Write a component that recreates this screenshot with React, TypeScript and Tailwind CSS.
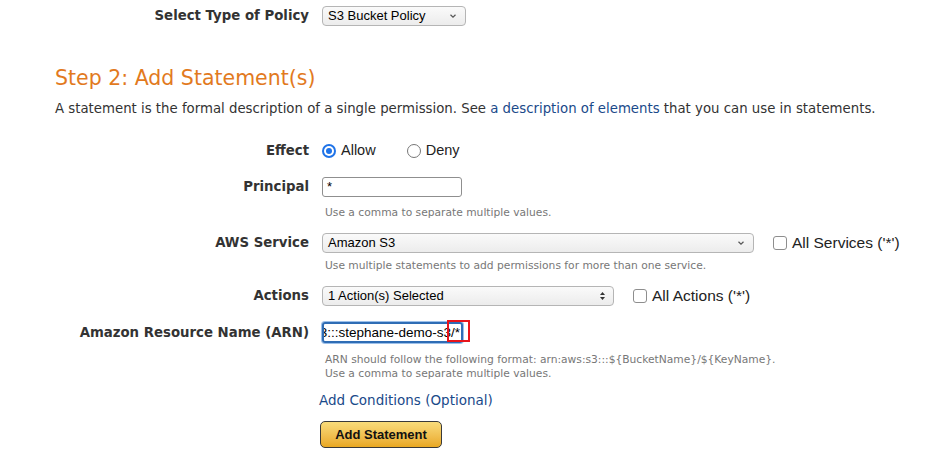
import React from "react";

const verdana = { fontFamily: '"DejaVu Sans", Verdana, sans-serif' };
const arial = { fontFamily: '"Liberation Sans", Arial, sans-serif' };

function Chevron() {
  return (
    <svg width="8" height="6" viewBox="0 0 8 6" className="absolute right-[8px] top-1/2 -translate-y-1/2">
      <path d="M1.5 1.8 L4 4.2 L6.5 1.8" fill="none" stroke="#555" strokeWidth="1.2" />
    </svg>
  );
}

function UpDown() {
  return (
    <svg width="7" height="10" viewBox="0 0 7 10" className="absolute right-[7px] top-1/2 -translate-y-1/2">
      <path d="M1 4 L3.5 1 L6 4 Z" fill="#333" />
      <path d="M1 6 L3.5 9 L6 6 Z" fill="#333" />
    </svg>
  );
}

function Select({ w, text, updown }: { w: number; text: string; updown?: boolean }) {
  return (
    <div
      className="relative h-[20px] rounded-[4px] border border-[#b5b5b5] bg-gradient-to-b from-[#fafafa] to-[#ececec] text-[13px] leading-[18px] text-black pl-[5px]"
      style={{ width: w, ...arial }}
    >
      {text}
      {updown ? <UpDown /> : <Chevron />}
    </div>
  );
}

function Checkbox({ label }: { label: string }) {
  return (
    <div className="flex items-center gap-[5px] text-[15.5px] text-[#222]" style={arial}>
      <div className="w-[14px] h-[14px] rounded-[3px] border border-[#8e8e8e] bg-white" />
      <span>{label}</span>
    </div>
  );
}

function Label({ children }: { children: React.ReactNode }) {
  return (
    <div className="text-right font-bold text-[13.3px] text-[#333]" style={verdana}>
      {children}
    </div>
  );
}

function Help({ children }: { children: React.ReactNode }) {
  return (
    <div className="text-[10.7px] leading-[14px] text-[#777] pl-[3px]" style={verdana}>
      {children}
    </div>
  );
}

export default function App() {
  return (
    <div className="w-[936px] h-[462px] bg-white overflow-hidden relative" style={verdana}>
      {/* Row: select type */}
      <div className="flex items-center h-[20px] mt-[6px]">
        <div className="w-[309px]">
          <Label>Select Type of Policy</Label>
        </div>
        <div className="ml-[13px]">
          <Select w={144} text="S3 Bucket Policy" />
        </div>
      </div>

      {/* Heading */}
      <h2 className="ml-[55px] mt-[40px] text-[20.5px] leading-[24px] text-[#e27a1e]" style={verdana}>
        Step 2: Add Statement(s)
      </h2>
      <p className="ml-[55px] mt-[10px] text-[13.3px] leading-[18px] text-[#333] whitespace-nowrap">
        A statement is the formal description of a single permission. See{" "}
        <span className="text-[#1a4a8a]">a description of elements</span> that you can use in statements.
      </p>

      {/* Effect */}
      <div className="flex items-center h-[20px] mt-[23px]">
        <div className="w-[309px]">
          <Label>Effect</Label>
        </div>
        <div className="ml-[13px] flex items-center text-[14.5px] text-[#222]" style={arial}>
          <div className="w-[14px] h-[14px] rounded-full bg-[#1f73e8] flex items-center justify-center">
            <div className="w-[10px] h-[10px] rounded-full bg-white flex items-center justify-center">
              <div className="w-[6px] h-[6px] rounded-full bg-[#1f73e8]" />
            </div>
          </div>
          <span className="ml-[5px]">Allow</span>
          <div className="ml-[31px] w-[14px] h-[14px] rounded-full border border-[#777] bg-white" />
          <span className="ml-[5px]">Deny</span>
        </div>
      </div>

      {/* Principal */}
      <div className="flex items-center h-[20px] mt-[16px]">
        <div className="w-[309px]">
          <Label>Principal</Label>
        </div>
        <div
          className="ml-[13px] w-[140px] h-[20px] border border-[#8f8f8f] rounded-[3px] text-[13px] leading-[18px] pl-[4px] text-black"
          style={arial}
        >
          *
        </div>
      </div>
      <div className="ml-[322px] mt-[9px]">
        <Help>Use a comma to separate multiple values.</Help>
      </div>

      {/* AWS Service */}
      <div className="flex items-center h-[20px] mt-[13px]">
        <div className="w-[309px]">
          <Label>AWS Service</Label>
        </div>
        <div className="ml-[13px]">
          <Select w={432} text="Amazon S3" />
        </div>
        <div className="ml-[19px]">
          <Checkbox label="All Services ('*')" />
        </div>
      </div>
      <div className="ml-[322px] mt-[6px]">
        <Help>Use multiple statements to add permissions for more than one service.</Help>
      </div>

      {/* Actions */}
      <div className="flex items-center h-[20px] mt-[13px]">
        <div className="w-[309px]">
          <Label>Actions</Label>
        </div>
        <div className="ml-[13px]">
          <Select w={292} text="1 Action(s) Selected" updown />
        </div>
        <div className="ml-[19px]">
          <Checkbox label="All Actions ('*')" />
        </div>
      </div>

      {/* ARN */}
      <div className="flex items-center h-[21px] mt-[16px]">
        <div className="w-[309px]">
          <Label>Amazon Resource Name (ARN)</Label>
        </div>
        <div className="ml-[13px] relative">
          <div
            className="w-[141px] h-[21px] border-2 border-[#2f6db5] rounded-[3px] text-[13.5px] leading-[17px] text-black overflow-hidden whitespace-nowrap flex justify-end pr-[1px] shadow-[0_0_0_1px_#9cc0ea]"
            style={arial}
          >
            <span className="shrink-0">s3:::stephane-demo-s3/*</span>
          </div>
          <div className="absolute left-[125px] -top-[2px] w-[23px] h-[22px] border-2 border-[#e8141b]" />
        </div>
      </div>
      <div className="ml-[322px] mt-[10px]">
        <Help>
          ARN should follow the following format: arn:aws:s3:::$&#123;BucketName&#125;/$&#123;KeyName&#125;.
          <br />
          Use a comma to separate multiple values.
        </Help>
      </div>

      {/* Add conditions */}
      <div className="ml-[319px] mt-[10px] text-[13.5px] leading-[18px] text-[#1a4a8a]">Add Conditions (Optional)</div>

      <div className="ml-[320px] mt-[12px]">
        <div
          className="w-[122px] h-[27px] rounded-[5px] border border-[#3a3a3a] bg-gradient-to-b from-[#f9dc7a] to-[#e9a820] flex items-center justify-center text-[13px] font-bold text-[#111]"
          style={arial}
        >
          Add Statement
        </div>
      </div>
    </div>
  );
}
